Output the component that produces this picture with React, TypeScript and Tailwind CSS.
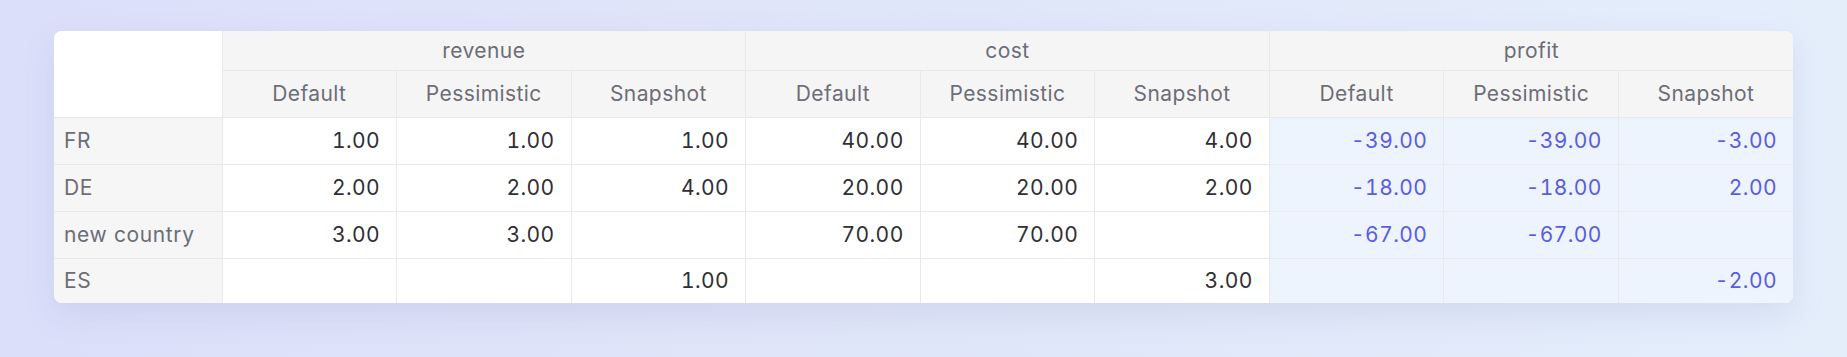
import React from "react";

type Row = { label: string; values: (number | null)[] };

const groups = ["revenue", "cost", "profit"];
const scenarios = ["Default", "Pessimistic", "Snapshot"];

const rows: Row[] = [
  { label: "FR", values: [1, 1, 1, 40, 40, 4, -39, -39, -3] },
  { label: "DE", values: [2, 2, 4, 20, 20, 2, -18, -18, 2] },
  { label: "new country", values: [3, 3, null, 70, 70, null, -67, -67, null] },
  { label: "ES", values: [null, null, 1, null, null, 3, null, null, -2] },
];

const fmt = (v: number | null) => (v === null ? "" : v.toFixed(2));

const App = () => {
  return (
    <div
      className="w-full h-[357px] bg-gradient-to-r from-[#dcdffa] via-[#e0e6f9] to-[#e4eefb] pt-[31px] px-[54px]"
      style={{ fontFamily: "Inter, 'Open Sans', sans-serif" }}
    >
      <div className="rounded-lg overflow-hidden bg-white shadow-[0_12px_32px_rgba(110,120,170,0.14)]">
        <table className="w-full table-fixed border-collapse text-[21px] tracking-[0.02em]">
          <colgroup>
            <col className="w-[168px]" />
            {Array.from({ length: 9 }).map((_, i) => (
              <col key={i} />
            ))}
          </colgroup>
          <thead>
            <tr className="h-[39px]">
              <th rowSpan={2} className="bg-white border-b border-r border-[#e9e9ec]"></th>
              {groups.map((g, i) => (
                <th
                  key={g}
                  colSpan={3}
                  className={`bg-[#f5f5f6] border-b border-[#e9e9ec] font-normal text-[#6d6d76] text-center ${
                    i < 2 ? "border-r" : ""
                  }`}
                >
                  {g}
                </th>
              ))}
            </tr>
            <tr className="h-[47px]">
              {groups.map((g, gi) =>
                scenarios.map((s, si) => (
                  <th
                    key={g + s}
                    className={`bg-[#f5f5f6] border-b border-[#e9e9ec] font-normal text-[#6d6d76] text-center ${
                      gi === 2 && si === 2 ? "" : "border-r"
                    }`}
                  >
                    {s}
                  </th>
                ))
              )}
            </tr>
          </thead>
          <tbody>
            {rows.map((r, ri) => {
              const last = ri === rows.length - 1;
              return (
                <tr key={r.label} className={last ? "h-[45px]" : "h-[47px]"}>
                  <td
                    className={`bg-[#f6f6f7] border-r border-[#e9e9ec] text-[#6d6d76] pl-[10px] tracking-[0.03em] ${
                      last ? "" : "border-b"
                    }`}
                  >
                    {r.label}
                  </td>
                  {r.values.map((v, ci) => {
                    const profit = ci >= 6;
                    return (
                      <td
                        key={ci}
                        className={`border-[#e9e9ec] text-right pr-4 tabular-nums ${
                          profit ? "bg-[#edf4fe] text-[#5b5ce3]" : "bg-white text-[#2f2f36]"
                        } ${last ? "" : "border-b"} ${ci === 8 ? "" : "border-r"}`}
                      >
                        {fmt(v)}
                      </td>
                    );
                  })}
                </tr>
              );
            })}
          </tbody>
        </table>
      </div>
    </div>
  );
};

export default App;
